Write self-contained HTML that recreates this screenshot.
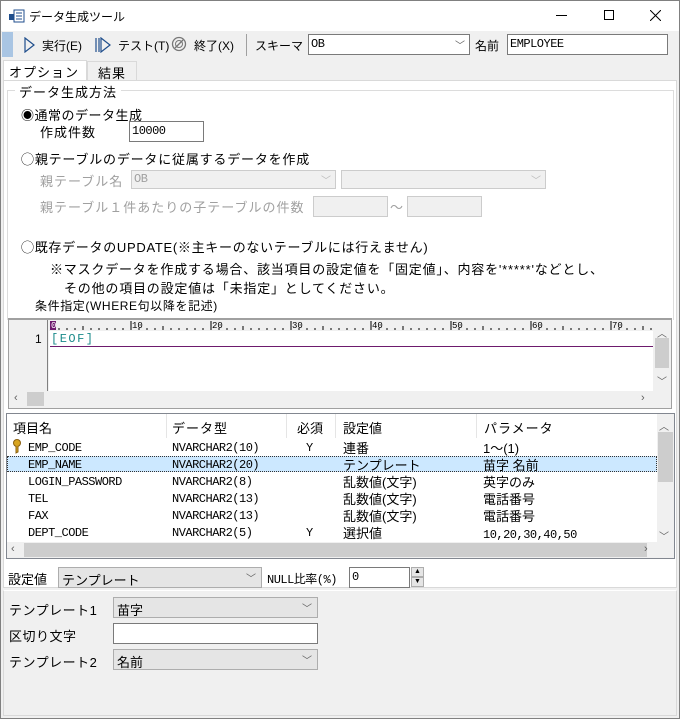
<!DOCTYPE html>
<html><head><meta charset="utf-8">
<style>
*{box-sizing:border-box;margin:0;padding:0}
body{width:680px;height:719px;overflow:hidden;background:#f0f0f0;font-family:"Liberation Sans","Noto Sans CJK JP",sans-serif;font-size:12px;color:#000;position:relative}
.a{position:absolute;white-space:nowrap}
.mono{font-family:"Liberation Mono","Noto Sans CJK JP",monospace;font-size:12px;letter-spacing:-0.5px}
.combo{position:absolute;border:1px solid #adadad;background:#e5e5e5;height:21px}
.combo .v{position:absolute;left:3px;top:2px}
.combo .ar{position:absolute;right:5px;top:2px;color:#606060;font-size:10px}
.inp{position:absolute;border:1px solid #7a7a7a;background:#fff;height:21px}
.dis{color:#a0a0a0}
.rb{font-family:"Noto Sans CJK JP",sans-serif;font-size:13px}
</style></head><body>
<div class="a" style="left:0;top:0;width:680px;height:719px;border:1px solid #808080"></div>
<div class="a" style="left:1px;top:1px;width:678px;height:30px;background:#fff"></div>
<svg class="a" style="left:9px;top:9px" width="16" height="14"><rect x="0" y="5" width="7" height="6" fill="#1f4e8c"/><rect x="5" y="1" width="10" height="12" fill="#fff" stroke="#1f4e8c"/><line x1="7" y1="4" x2="13" y2="4" stroke="#1f4e8c"/><line x1="7" y1="7" x2="13" y2="7" stroke="#1f4e8c"/><line x1="7" y1="10" x2="13" y2="10" stroke="#1f4e8c"/></svg>
<div class="a" style="left:29px;top:8px;font-size:12px">データ生成ツール</div>
<div class="a" style="left:556px;top:15px;width:11px;height:1px;background:#000"></div>
<div class="a" style="left:604px;top:10px;width:10px;height:10px;border:1px solid #000"></div>
<svg class="a" style="left:650px;top:10px" width="11" height="11"><path d="M0 0L11 11M11 0L0 11" stroke="#000"/></svg>
<div class="a" style="left:1px;top:31px;width:678px;height:28px;background:#f0f0f0"></div>
<div class="a" style="left:2px;top:32px;width:11px;height:25px;background:#a9c5e3"></div>
<svg class="a" style="left:24px;top:37px" width="12" height="16"><path d="M1 1L10 8L1 15Z" fill="none" stroke="#1f4e8c" stroke-width="1.2"/></svg>
<div class="a" style="left:42px;top:37px">実行(E)</div>
<svg class="a" style="left:95px;top:37px" width="16" height="16"><path d="M1 1V15M4 1V15M6 1L15 8L6 15Z" fill="none" stroke="#1f4e8c" stroke-width="1.2"/></svg>
<div class="a" style="left:118px;top:37px">テスト(T)</div>
<svg class="a" style="left:171px;top:36px" width="16" height="16"><circle cx="8" cy="8" r="6.5" fill="none" stroke="#777" stroke-width="1.3"/><circle cx="8" cy="8" r="3.5" fill="none" stroke="#777"/><path d="M4 12L12 4" stroke="#777" stroke-width="1.3"/></svg>
<div class="a" style="left:194px;top:37px">終了(X)</div>
<div class="a" style="left:246px;top:34px;width:1px;height:22px;background:#a0a0a0"></div>
<div class="a" style="left:255px;top:37px">スキーマ</div>
<div class="inp" style="left:308px;top:34px;width:162px;height:21px"><span class="a mono" style="left:2px;top:2px">OB</span><span class="a" style="right:4px;top:2px;color:#606060;font-size:10px">﹀</span></div>
<div class="a" style="left:475px;top:37px">名前</div>
<div class="inp" style="left:507px;top:34px;width:161px;height:21px"><span class="a mono" style="left:2px;top:2px">EMPLOYEE</span></div>
<div class="a" style="left:3px;top:60px;width:84px;height:21px;background:#fff;border:1px solid #d9d9d9;border-bottom:none"></div>
<div class="a" style="left:9px;top:62px;font-size:13px;letter-spacing:1px">オプション</div>
<div class="a" style="left:87px;top:61px;width:50px;height:19px;background:#f0f0f0;border:1px solid #d9d9d9;border-bottom:none"></div>
<div class="a" style="left:98px;top:63px;font-size:13px;letter-spacing:1px">結果</div>
<div class="a" style="left:3px;top:80px;width:674px;height:508px;background:#fff;border:1px solid #d9d9d9"></div>
<div class="a" style="left:7px;top:90px;width:667px;height:230px;border:1px solid #dcdcdc;border-bottom:none"></div>
<div class="a" style="left:15px;top:82px;background:#fff;padding:0 4px;font-size:13px;letter-spacing:1px">データ生成方法</div>
<div class="a" style="left:21px;top:105px;font-size:13px;letter-spacing:0.5px"><span class="rb">◉</span>通常のデータ生成</div>
<div class="a" style="left:40px;top:122px;font-size:13px;letter-spacing:1px">作成件数</div>
<div class="inp" style="left:129px;top:121px;width:75px;height:21px"><span class="a mono" style="left:2px;top:2px">10000</span></div>
<div class="a" style="left:21px;top:149px;font-size:13px;letter-spacing:0.8px"><span class="rb">◯</span>親テーブルのデータに従属するデータを作成</div>
<div class="a dis" style="left:40px;top:171px;font-size:13px;letter-spacing:1px">親テーブル名</div>
<div class="a" style="left:131px;top:170px;width:205px;height:19px;border:1px solid #ccc;background:#f0f0f0"><span class="a mono dis" style="left:2px;top:1px">OB</span><span class="a" style="right:4px;top:1px;color:#bbb;font-size:10px">﹀</span></div>
<div class="a" style="left:341px;top:170px;width:205px;height:19px;border:1px solid #ccc;background:#f0f0f0"><span class="a" style="right:4px;top:1px;color:#bbb;font-size:10px">﹀</span></div>
<div class="a dis" style="left:40px;top:197px;font-size:13px;letter-spacing:1px">親テーブル１件あたりの子テーブルの件数</div>
<div class="a" style="left:313px;top:196px;width:75px;height:21px;border:1px solid #ccc;background:#f0f0f0"></div>
<div class="a dis" style="left:390px;top:197px;font-size:13px">〜</div>
<div class="a" style="left:407px;top:196px;width:75px;height:21px;border:1px solid #ccc;background:#f0f0f0"></div>
<div class="a" style="left:21px;top:237px;font-size:13px;letter-spacing:0.7px"><span class="rb">◯</span>既存データのUPDATE(※主キーのないテーブルには行えません)</div>
<div class="a" style="left:50px;top:259px;font-size:13px;letter-spacing:0.8px">※マスクデータを作成する場合、該当項目の設定値を「固定値」、内容を'*****'などとし、</div>
<div class="a" style="left:64px;top:278px;font-size:13px;letter-spacing:0.8px">その他の項目の設定値は「未指定」としてください。</div>
<div class="a" style="left:35px;top:297px;font-size:12px;letter-spacing:0.6px">条件指定(WHERE句以降を記述)</div>
<div class="a" style="left:8px;top:318px;width:664px;height:91px;border:1px solid #a0a0a0;border-top:2px solid #a0a0a0;background:#f0f0f0"></div>
<div class="a" style="left:10px;top:320px;width:38px;height:71px;background:#f0f0f0;border-right:1px solid #808080"></div>
<div class="a" style="left:49px;top:320px;width:604px;height:71px;background:#fff"></div>
<svg class="a" style="left:49px;top:320px" width="604" height="11">
<rect width="604" height="11" fill="#f0f0f0"/>
<rect x="1" y="1" width="6" height="9" fill="#6d1a6d"/>
<g stroke="#000">
<path d="M10 10V8M18 10V8M26 10V8M34 10V6M42 10V8M50 10V8M58 10V8M66 10V8M74 10V8M82 10V1M90 10V8M98 10V8M106 10V8M114 10V6M122 10V8M130 10V8M138 10V8M146 10V8M154 10V8M162 10V1M170 10V8M178 10V8M186 10V8M194 10V6M202 10V8M210 10V8M218 10V8M226 10V8M234 10V8M242 10V1M250 10V8M258 10V8M266 10V8M274 10V6M282 10V8M290 10V8M298 10V8M306 10V8M314 10V8M322 10V1M330 10V8M338 10V8M346 10V8M354 10V6M362 10V8M370 10V8M378 10V8M386 10V8M394 10V8M402 10V1M410 10V8M418 10V8M426 10V8M434 10V6M442 10V8M450 10V8M458 10V8M466 10V8M474 10V8M482 10V1M490 10V8M498 10V8M506 10V8M514 10V6M522 10V8M530 10V8M538 10V8M546 10V8M554 10V8M562 10V1M570 10V8M578 10V8M586 10V8M594 10V6M602 10V8" stroke-width="1"/>
</g>
<g font-family="Liberation Mono" font-size="9" fill="#000"><text x="2" y="8" fill="#fff">0</text><text x="83" y="8">10</text><text x="163" y="8">20</text><text x="243" y="8">30</text><text x="323" y="8">40</text><text x="403" y="8">50</text><text x="483" y="8">60</text><text x="563" y="8">70</text></g>
</svg>
<div class="a" style="left:35px;top:332px;font-size:12px">1</div>
<div class="a mono" style="left:51px;top:332px;color:#1a8a8a;letter-spacing:1.5px">[EOF]</div>
<div class="a" style="left:50px;top:346px;width:603px;height:1px;background:#6d1a6d"></div>
<div class="a" style="left:653px;top:320px;width:17px;height:71px;background:#f0f0f0"></div>
<div class="a" style="left:655px;top:338px;width:14px;height:30px;background:#cdcdcd"></div>
<div class="a" style="left:657px;top:325px;font-size:10px;color:#606060">︿</div>
<div class="a" style="left:657px;top:373px;font-size:10px;color:#606060">﹀</div>
<div class="a" style="left:10px;top:391px;width:643px;height:16px;background:#f0f0f0"></div>
<div class="a" style="left:27px;top:392px;width:17px;height:14px;background:#cdcdcd"></div>
<div class="a" style="left:14px;top:392px;font-size:11px;color:#606060">‹</div>
<div class="a" style="left:641px;top:392px;font-size:11px;color:#606060">›</div>
<div class="a" style="left:6px;top:413px;width:669px;height:146px;border:1px solid #828790;background:#fff"></div>
<div class="a" style="left:7px;top:414px;width:650px;height:24px;background:#fff"></div>
<div class="a" style="left:166px;top:414px;width:1px;height:24px;background:#e5e5e5"></div>
<div class="a" style="left:286px;top:414px;width:1px;height:24px;background:#e5e5e5"></div>
<div class="a" style="left:335px;top:414px;width:1px;height:24px;background:#e5e5e5"></div>
<div class="a" style="left:476px;top:414px;width:1px;height:24px;background:#e5e5e5"></div>
<div class="a" style="left:13px;top:418px;font-size:13px">項目名</div>
<div class="a" style="left:172px;top:418px;font-size:13px;letter-spacing:1px">データ型</div>
<div class="a" style="left:297px;top:418px;font-size:13px">必須</div>
<div class="a" style="left:343px;top:418px;font-size:13px">設定値</div>
<div class="a" style="left:484px;top:418px;font-size:13px;letter-spacing:1px">パラメータ</div>
<div class="a" style="left:7px;top:456px;width:650px;height:16px;background:#cce8ff;border:1px dotted #333"></div>
<svg class="a" style="left:12px;top:439px" width="10" height="15"><circle cx="5" cy="4" r="3.5" fill="#d8a520" stroke="#8a6010"/><path d="M4 7V14L6 13V7" fill="#d8a520" stroke="#8a6010"/></svg>
<div class="a mono" style="left:28px;top:440px;line-height:17px">EMP_CODE<br>EMP_NAME<br>LOGIN_PASSWORD<br>TEL<br>FAX<br>DEPT_CODE</div>
<div class="a mono" style="left:172px;top:440px;line-height:17px">NVARCHAR2(10)<br>NVARCHAR2(20)<br>NVARCHAR2(8)<br>NVARCHAR2(13)<br>NVARCHAR2(13)<br>NVARCHAR2(5)</div>
<div class="a mono" style="left:306px;top:440px;line-height:17px">Y<br><br><br><br><br>Y</div>
<div class="a" style="left:343px;top:440px;line-height:17px;font-size:13px">連番<br>テンプレート<br>乱数値(文字)<br>乱数値(文字)<br>乱数値(文字)<br>選択値</div>
<div class="a" style="left:483px;top:440px;line-height:17px;font-size:13px">1〜(1)<br>苗字 名前<br>英字のみ<br>電話番号<br>電話番号<br><span class="mono">10,20,30,40,50</span></div>
<div class="a" style="left:657px;top:414px;width:17px;height:128px;background:#f0f0f0"></div>
<div class="a" style="left:658px;top:432px;width:15px;height:50px;background:#cdcdcd"></div>
<div class="a" style="left:659px;top:418px;font-size:10px;color:#606060">︿</div>
<div class="a" style="left:659px;top:528px;font-size:10px;color:#606060">﹀</div>
<div class="a" style="left:7px;top:542px;width:667px;height:16px;background:#f0f0f0"></div>
<div class="a" style="left:24px;top:543px;width:623px;height:14px;background:#cdcdcd"></div>
<div class="a" style="left:11px;top:543px;font-size:11px;color:#606060">‹</div>
<div class="a" style="left:644px;top:543px;font-size:11px;color:#606060">›</div>
<div class="a" style="left:8px;top:569px;font-size:13px">設定値</div>
<div class="combo" style="left:58px;top:567px;width:204px"><span class="v" style="font-size:13px">テンプレート</span><span class="ar">﹀</span></div>
<div class="a mono" style="left:267px;top:570px">NULL比率(%)</div>
<div class="inp" style="left:349px;top:567px;width:61px;height:21px"><span class="a mono" style="left:2px;top:2px">0</span></div>
<div class="a" style="left:411px;top:567px;width:13px;height:10px;border:1px solid #adadad;background:#e5e5e5;font-size:7px;text-align:center;line-height:8px">▲</div>
<div class="a" style="left:411px;top:577px;width:13px;height:10px;border:1px solid #adadad;background:#e5e5e5;font-size:7px;text-align:center;line-height:8px">▼</div>
<div class="a" style="left:3px;top:590px;width:674px;height:126px;border:1px solid #d9d9d9;border-top:1px solid #fff;background:#f0f0f0"></div>
<div class="a" style="left:9px;top:600px;font-size:13px;letter-spacing:0.5px">テンプレート1</div>
<div class="combo" style="left:113px;top:597px;width:205px"><span class="v" style="font-size:13px">苗字</span><span class="ar">﹀</span></div>
<div class="a" style="left:9px;top:626px;font-size:13px;letter-spacing:0.5px">区切り文字</div>
<div class="inp" style="left:113px;top:623px;width:205px"></div>
<div class="a" style="left:9px;top:652px;font-size:13px;letter-spacing:0.5px">テンプレート2</div>
<div class="combo" style="left:113px;top:649px;width:205px"><span class="v" style="font-size:13px">名前</span><span class="ar">﹀</span></div>
</body></html>
